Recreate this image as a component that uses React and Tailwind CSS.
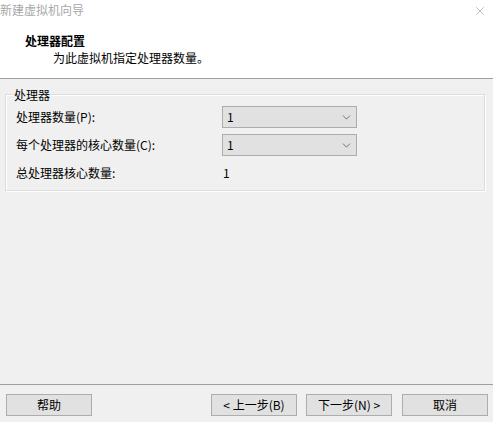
import { X, ChevronDown } from "lucide-react";

const font = { fontFamily: '"Noto Sans CJK SC", "Microsoft YaHei", sans-serif' };

function Select({ value }) {
  return (
    <div className="flex h-[22px] w-[135px] items-center justify-between border border-[#acacac] bg-[#e1e1e1] pl-[4px] pr-[3px] text-[12px] text-black">
      <span>{value}</span>
      <ChevronDown size={13} strokeWidth={1.3} className="text-[#444]" />
    </div>
  );
}

function Button({ children, className = "" }) {
  return (
    <button className={`flex h-[22px] w-[86px] items-center justify-center border border-[#adadad] bg-[#e1e1e1] text-[12px] text-black ${className}`}>
      {children}
    </button>
  );
}

export default function App() {
  return (
    <div className="flex h-[422px] w-[493px] flex-col bg-[#f0f0f0] text-[12px] leading-none" style={font}>
      {/* Header */}
      <div className="h-[79px] border-b border-[#a0a0a0] bg-white">
        <div className="flex items-start justify-between pt-[4px]">
          <span className="text-[#a8a8a8]">新建虚拟机向导</span>
          <X size={14} strokeWidth={1} className="mr-[6px] mt-[0px] text-[#888]" />
        </div>
        <div className="pl-[25px] pt-[17px] font-bold text-black">处理器配置</div>
        <div className="pl-[53px] pt-[5px] text-black">为此虚拟机指定处理器数量。</div>
      </div>

      {/* Body */}
      <div className="flex-1 px-[5px] pt-[15px]">
        <div className="relative h-[97px] w-[480px] border border-[#dcdcdc] shadow-[inset_1px_1px_0_#fff,1px_1px_0_#fff]">
          <span className="absolute left-[7px] top-[-6px] bg-[#f0f0f0] px-[1px] text-black">处理器</span>
          <div className="flex flex-col gap-[6px] pl-[10px] pt-[11px]">
            <div className="flex items-center">
              <span className="w-[206px] text-black">处理器数量(P):</span>
              <Select value="1" />
            </div>
            <div className="flex items-center">
              <span className="w-[206px] text-black">每个处理器的核心数量(C):</span>
              <Select value="1" />
            </div>
            <div className="flex items-center pt-[5px]">
              <span className="w-[207px] text-black">总处理器核心数量:</span>
              <span className="text-black">1</span>
            </div>
          </div>
        </div>
      </div>

      {/* Footer */}
      <div className="h-[38px] border-t border-[#a0a0a0]">
        <div className="flex items-center pt-[9px]">
          <Button className="ml-[6px]">帮助</Button>
          <Button className="ml-[119px]">&lt; 上一步(B)</Button>
          <Button className="ml-[9px]">下一步(N) &gt;</Button>
          <Button className="ml-[10px]">取消</Button>
        </div>
      </div>
    </div>
  );
}
